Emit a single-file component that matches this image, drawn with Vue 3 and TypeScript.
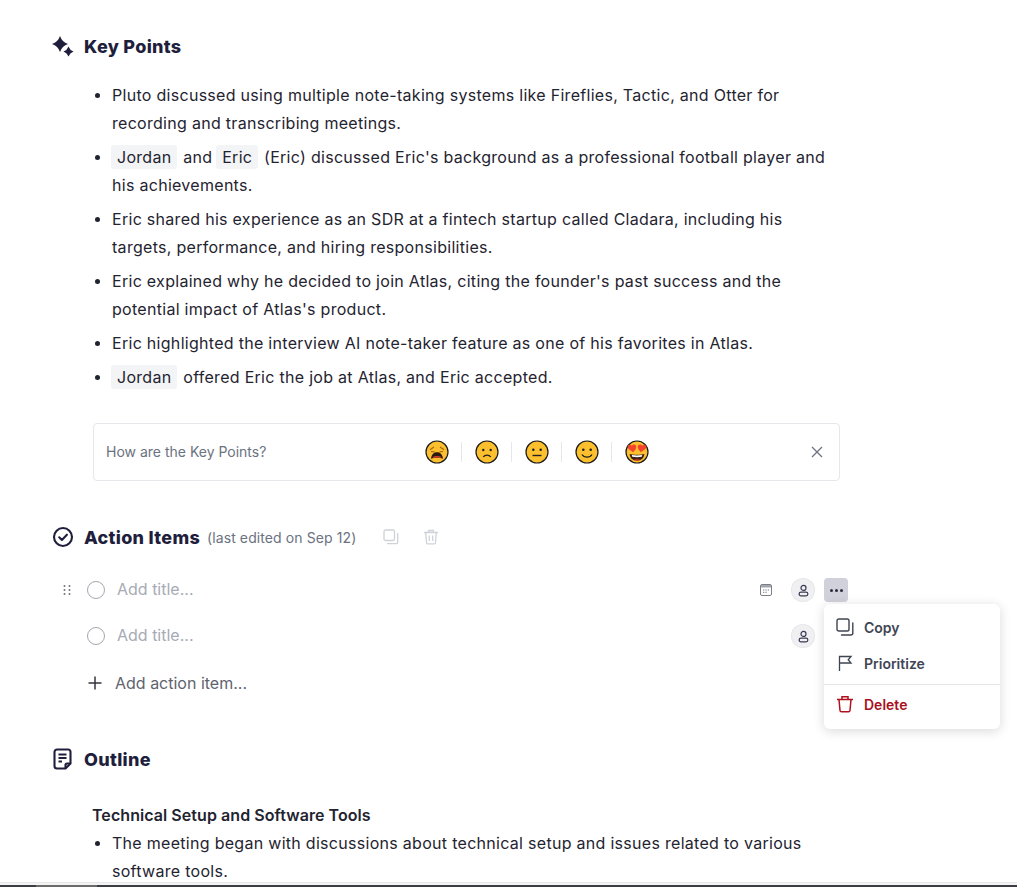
<template>
  <div class="page">
    <div class="doc">
      <section class="key-points">
        <h2 class="heading">
          <svg class="head-icon" viewBox="0 0 22 22" fill="#1f1f3d">
            <path d="M8 1Q10 7 16 9 10 11 8 17 6 11 0 9 6 7 8 1z" />
            <path d="M16.500 11.500Q17.800 15.200 21.500 16.500 17.800 17.800 16.500 21.500 15.200 17.800 11.500 16.500 15.200 15.200 16.500 11.500z" />
          </svg>
          Key Points
        </h2>
        <ul class="bullets">
          <li>Pluto discussed using multiple note-taking systems like Fireflies, Tactic, and Otter for recording and transcribing meetings.</li>
          <li><span class="mention">Jordan</span> and <span class="mention">Eric</span> (Eric) discussed Eric's background as a professional football player and his achievements.</li>
          <li>Eric shared his experience as an SDR at a fintech startup called Cladara, including his targets, performance, and hiring responsibilities.</li>
          <li>Eric explained why he decided to join Atlas, citing the founder's past success and the potential impact of Atlas's product.</li>
          <li>Eric highlighted the interview AI note-taker feature as one of his favorites in Atlas.</li>
          <li><span class="mention">Jordan</span> offered Eric the job at Atlas, and Eric accepted.</li>
        </ul>
        <div class="feedback">
          <span class="feedback-label">How are the Key Points?</span>
          <div class="emojis">
            <span v-for="(face, i) in faces" :key="face" class="emoji-cell">
              <svg class="emoji" viewBox="0 0 24 24">
                <circle cx="12" cy="12" r="11" fill="#fcc02e" stroke="#1a1a1a" stroke-width="1.200" />
                <template v-if="i === 0">
                  <path d="M5 9.800l4-2.800M19 9.800l-4-2.800M6 11.500l3.500.3M18 11.500l-3.500.3" stroke="#a8660f" stroke-width="1.200" fill="none" />
                  <path d="M6 18.800c.6-4.800 3.200-6.500 6-6.500s5.400 1.700 6 6.500c-3.400-1.400-8.600-1.400-12 0z" fill="#2b1a12" />
                  <path d="M8.200 17.500c2.200-.9 5.400-.9 7.600 0" stroke="#d8402a" stroke-width="1.600" fill="none" />
                </template>
                <template v-else-if="i === 1">
                  <circle cx="8.300" cy="10" r="1.200" fill="#222" />
                  <circle cx="15.700" cy="10" r="1.200" fill="#222" />
                  <path d="M8.200 17c1.800-2.600 5.800-2.600 7.600 0" stroke="#222" stroke-width="1.300" fill="none" />
                </template>
                <template v-else-if="i === 2">
                  <circle cx="8.300" cy="9.800" r="1.300" fill="#222" />
                  <circle cx="15.700" cy="9.800" r="1.300" fill="#222" />
                  <path d="M7.500 15.500h9" stroke="#222" stroke-width="1.400" />
                </template>
                <template v-else-if="i === 3">
                  <circle cx="8.300" cy="9.800" r="1.300" fill="#222" />
                  <circle cx="15.700" cy="9.800" r="1.300" fill="#222" />
                  <path d="M7 14.500c2 3.600 8 3.600 10 0" stroke="#222" stroke-width="1.300" fill="none" />
                </template>
                <template v-else>
                  <path d="M4.600 14c2.300 1 12.500 1 14.800 0-.5 4.600-3.700 6.700-7.400 6.700s-6.900-2.100-7.400-6.700z" fill="#3a2116" />
                  <path d="M6.800 15c3 .6 7.400.6 10.400 0l-.4 1.800c-3 .6-6.600.6-9.600 0z" fill="#fff" />
                  <path d="M12 19.200c-1.400 0-2.600.3-3.400.8 2 1.100 4.800 1.100 6.800 0-.8-.5-2-.8-3.400-.8z" fill="#e8402a" />
                  <path d="M8.200 12.200C5.200 10.300 2.500 8.800 2.600 6.600 2.700 4.600 5.800 3.800 7 5.800c.8-2 4.300-1.500 4.300 1.100 0 1.700-1.300 3.300-3.100 5.300z" fill="#f4432c" />
                  <path d="M15.800 12.200c3-1.900 5.700-3.400 5.600-5.600-.1-2-3.200-2.800-4.400-.8-.8-2-4.300-1.500-4.300 1.100 0 1.700 1.300 3.300 3.100 5.300z" fill="#f4432c" />
                </template>
              </svg>
            </span>
          </div>
          <svg class="close-icon" viewBox="0 0 12 12" fill="none" stroke="#6b7280" stroke-width="1.300">
            <path d="M1 1l10 10M11 1L1 11" />
          </svg>
        </div>
      </section>

      <section class="actions">
        <div class="heading-row">
          <h2 class="heading">
            <svg class="head-icon" viewBox="0 0 22 22" fill="none" stroke="#1f1f3d" stroke-width="2.100">
              <circle cx="11" cy="11" r="9" />
              <path d="M7.200 11.300l2.700 2.600 5-5.200" stroke-linecap="round" stroke-linejoin="round" />
            </svg>
            Action Items
          </h2>
          <span class="edited">(last edited on Sep 12)</span>
          <div class="head-tools">
            <svg viewBox="0 0 16 16" fill="none" stroke="#cfd2d9" stroke-width="1.300">
              <rect x="1" y="1" width="10.500" height="10.500" rx="1.500" />
              <path d="M14.700 4.500v8.700a1.500 1.500 0 0 1-1.500 1.500H4.500" stroke-linecap="round" />
            </svg>
            <svg viewBox="0 0 16 16" fill="none" stroke="#cfd2d9" stroke-width="1.300">
              <path d="M1 3.500h14M5.500 3.300V1.500h5v1.800M2.700 3.500l.8 10.200a1.200 1.200 0 0 0 1.200 1.100h6.600a1.200 1.200 0 0 0 1.200-1.100l.8-10.200M6.300 6.500v5.500M9.700 6.500v5.500" />
            </svg>
          </div>
        </div>

        <div class="task task-active">
          <svg class="grip" viewBox="0 0 8 12" fill="#6f7380">
            <circle v-for="dot in gripDots" :key="dot.x + '-' + dot.y" :cx="dot.x" :cy="dot.y" r="1" />
          </svg>
          <span class="check"></span>
          <span class="task-title">Add title...</span>
          <svg class="calendar" viewBox="0 0 12 12" fill="none" stroke="#7d7f88">
            <rect x="0.500" y="0.500" width="11" height="11" rx="1.500" />
            <path d="M1 1h10v2.500H1z" fill="#a4a6ad" stroke="none" />
            <path d="M3 6h1.300M5.400 6h1.300M7.800 6h1.300M3 8.300h1.300M5.400 8.300h1.300" />
          </svg>
          <span class="assignee">
            <svg viewBox="0 0 14 14" fill="none" stroke="#3a3a55" stroke-width="1.300">
              <circle cx="7" cy="4.200" r="2.700" />
              <rect x="2.300" y="8.700" width="9.400" height="4" rx="2" />
            </svg>
          </span>
          <span class="more">
            <i></i><i></i><i></i>
          </span>
        </div>
        <div class="task task-second">
          <span class="check"></span>
          <span class="task-title">Add title...</span>
          <span class="assignee">
            <svg viewBox="0 0 14 14" fill="none" stroke="#3a3a55" stroke-width="1.300">
              <circle cx="7" cy="4.200" r="2.700" />
              <rect x="2.300" y="8.700" width="9.400" height="4" rx="2" />
            </svg>
          </span>
        </div>
        <div class="add-item">
          <svg viewBox="0 0 14 14" fill="none" stroke="#33343f" stroke-width="1.500">
            <path d="M7 .5v13M.5 7h13" />
          </svg>
          Add action item...
        </div>

        <div class="menu">
          <div class="menu-item">
            <svg viewBox="0 0 18 18" fill="none" stroke="#3f4450" stroke-width="1.400">
              <rect x="1" y="1" width="12" height="12" rx="1.800" />
              <path d="M16.800 5v10a2 2 0 0 1-2 2H5.500" stroke-linecap="round" />
            </svg>
            Copy
          </div>
          <div class="menu-item">
            <svg viewBox="0 0 18 18" fill="none" stroke="#3f4450" stroke-width="1.300">
              <path d="M3.500 17V2.500h11.500l-2.800 3.200 2.800 3.300H3.500" />
            </svg>
            Prioritize
          </div>
          <div class="menu-line"></div>
          <div class="menu-item danger">
            <svg viewBox="0 0 18 18" fill="none" stroke="#b1101e" stroke-width="1.500">
              <path d="M1 4.500h16M6 4.300V1.800h6v2.500M3 4.500l1 11a1.500 1.500 0 0 0 1.500 1.300h7a1.500 1.500 0 0 0 1.500-1.300l1-11" />
            </svg>
            Delete
          </div>
        </div>
      </section>

      <section class="outline">
        <h2 class="heading">
          <svg class="head-icon" viewBox="0 0 22 22" fill="none" stroke="#1f1f3d" stroke-width="2.100">
            <path d="M13.500 20.500H5a2.500 2.500 0 0 1-2.500-2.500V4A2.500 2.500 0 0 1 5 1.500h11A2.500 2.500 0 0 1 18.500 4v11.500z" stroke-linejoin="round" />
            <path d="M6.500 6.500h8M6.500 10h8M6.500 13.500h3.500M13.500 20v-3a1.500 1.500 0 0 1 1.500-1.500h3" />
          </svg>
          Outline
        </h2>
        <h3 class="sub">Technical Setup and Software Tools</h3>
        <ul class="bullets tight">
          <li>The meeting began with discussions about technical setup and issues related to various software tools.</li>
        </ul>
      </section>
    </div>
    <div class="bottom-edge"><div class="thumb"></div></div>
  </div>
</template>

<script setup lang="ts">
const faces: string[] = ["weary", "sad", "neutral", "smile", "love"];

const gripDots: { x: number; y: number }[] = [];
for (const y of [2, 6, 10]) {
  for (const x of [1.5, 6.5]) {
    gripDots.push({ x, y });
  }
}
</script>

<style>
html,
body {
  margin: 0;
  background: #fff;
}
</style>

<style scoped>
.page {
  position: relative;
  width: 1017px;
  height: 887px;
  overflow: hidden;
  font-family: Inter, "Liberation Sans", sans-serif;
  color: #1f2430;
  background: #fff;
}

.doc {
  width: 840px;
  padding-top: 32px;
}

.heading {
  display: flex;
  align-items: center;
  gap: 10px;
  margin: 0 0 0 52px;
  height: 28px;
  font-family: Inter, "Open Sans", sans-serif;
  font-size: 18px;
  font-weight: 800;
  letter-spacing: 0.3px;
  color: #1f1f3d;
}

.head-icon {
  width: 22px;
  height: 22px;
  flex: none;
}

.bullets {
  margin: 21px 0 0;
  padding: 0 0 0 112px;
  font-size: 16px;
  line-height: 28px;
  letter-spacing: 0.29px;
}

.bullets li {
  margin-bottom: 6px;
}

.bullets li::marker {
  font-size: 15px;
}

.mention {
  display: inline-block;
  height: 24px;
  line-height: 24px;
  padding: 0 6px;
  margin: 0 1px 0 -1px;
  border-radius: 3px;
  background: #f3f4f6;
}

.feedback {
  display: flex;
  align-items: center;
  box-sizing: border-box;
  height: 58px;
  margin: 32px 0 0 93px;
  padding: 0 16px 0 12px;
  border: 1px solid #e5e7eb;
  border-radius: 4px;
}

.feedback-label {
  width: 306px;
  margin-bottom: 2px;
  font-size: 14px;
  color: #6b7280;
}

.emojis {
  display: flex;
}

.emoji-cell {
  display: flex;
  align-items: center;
  height: 20px;
  padding: 0 12px 0 13px;
  border-right: 1px solid #e5e7eb;
}

.emoji-cell:last-child {
  border-right: none;
}

.emoji {
  width: 24px;
  height: 24px;
  margin: -2px 0;
  flex: none;
}

.close-icon {
  width: 12px;
  height: 12px;
  margin-left: auto;
}

.actions {
  position: relative;
  margin-top: 42px;
}

.heading-row {
  display: flex;
  align-items: center;
}

.edited {
  margin-left: 7px;
  font-size: 14px;
  letter-spacing: 0.1px;
  color: #6b7280;
}

.head-tools {
  display: flex;
  gap: 24px;
  margin-left: 27px;
}

.head-tools svg {
  width: 16px;
  height: 16px;
}

.task {
  display: flex;
  align-items: center;
  height: 46px;
  padding-left: 87px;
}

.task-active {
  position: relative;
  margin-top: 16px;
}

.grip {
  position: absolute;
  left: 63px;
  top: 17px;
  width: 8px;
  height: 12px;
}

.check {
  width: 16px;
  height: 16px;
  border: 1px solid #a4a7b0;
  border-radius: 50%;
  margin-right: 12px;
  flex: none;
}

.task-title {
  margin-bottom: 2px;
  font-size: 16px;
  color: #a7abb5;
}

.calendar {
  width: 12px;
  height: 12px;
  margin-left: auto;
  margin-right: 19px;
}

.assignee {
  display: flex;
  align-items: center;
  justify-content: center;
  width: 24px;
  height: 24px;
  border-radius: 50%;
  background: #f0f0f3;
  box-shadow: inset 0 0 0 1px #e8e8ec;
}

.assignee svg {
  width: 13px;
  height: 13px;
}

.task-active .assignee {
  margin-right: 9px;
}

.more {
  display: flex;
  align-items: center;
  justify-content: center;
  gap: 2px;
  width: 24px;
  height: 24px;
  margin-right: -8px;
  border-radius: 4px;
  background: #d1d1db;
}

.more i {
  width: 3px;
  height: 3px;
  border-radius: 50%;
  background: #2a2a3c;
}

.task-second .assignee {
  margin-left: auto;
  margin-right: 25px;
}

.add-item {
  display: flex;
  align-items: center;
  gap: 13px;
  height: 28px;
  margin: 10px 0 0 88px;
  font-size: 16px;
  color: #5f636e;
}

.add-item svg {
  width: 14px;
  height: 14px;
}

.menu {
  position: absolute;
  left: 824px;
  top: 81px;
  width: 176px;
  height: 125px;
  padding-top: 5px;
  box-sizing: border-box;
  border-radius: 6px;
  background: #fff;
  box-shadow: 0 2px 12px rgba(20, 20, 40, 0.16);
  font-size: 14px;
  font-weight: 600;
  color: #3f4554;
}

.menu-item {
  display: flex;
  align-items: center;
  gap: 10px;
  height: 36px;
  padding-left: 12px;
}

.menu-item svg {
  width: 18px;
  height: 18px;
}

.menu-line {
  height: 1px;
  margin: 3px 0 1px;
  background: #e5e7eb;
}

.menu-item.danger {
  color: #a80f1d;
}

.outline {
  margin-top: 48px;
}

.sub {
  margin: 30px 0 0 92px;
  font-size: 16px;
  line-height: 24px;
  font-weight: 600;
  letter-spacing: 0.06px;
  color: #1f2430;
}

.bullets.tight {
  margin-top: 2px;
}

.bottom-edge {
  position: absolute;
  left: 0;
  right: 0;
  bottom: 0;
  height: 2px;
  background: #3c3e46;
  box-shadow: 0 -2px 0 #f4f4f4, 0 -3px 0 #e6e6e6;
}

.thumb {
  position: absolute;
  left: 36px;
  top: 0;
  width: 61px;
  height: 2px;
  background: #6b6b6b;
}
</style>
